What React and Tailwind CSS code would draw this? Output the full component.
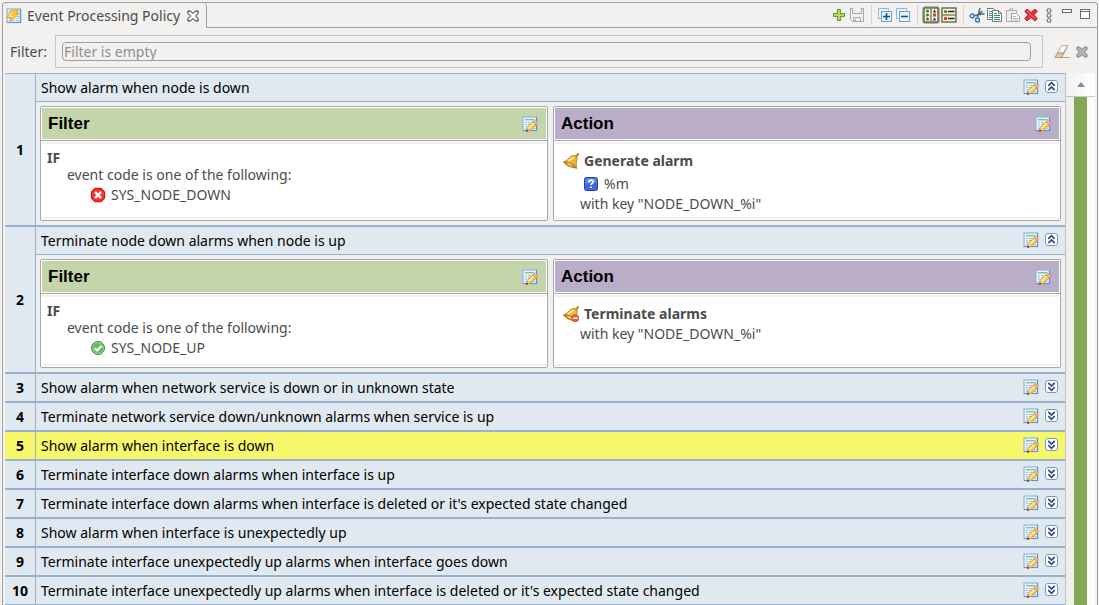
import React, { useState } from "react";

const rules = [
  {
    title: "Show alarm when node is down",
    open: true,
    filter: { event: "SYS_NODE_DOWN", status: "error" },
    action: { kind: "generate", title: "Generate alarm", message: "%m", key: 'with key "NODE_DOWN_%i"' },
  },
  {
    title: "Terminate node down alarms when node is up",
    open: true,
    filter: { event: "SYS_NODE_UP", status: "ok" },
    action: { kind: "terminate", title: "Terminate alarms", key: 'with key "NODE_DOWN_%i"' },
  },
  { title: "Show alarm when network service is down or in unknown state" },
  { title: "Terminate network service down/unknown alarms when service is up" },
  { title: "Show alarm when interface is down", selected: true },
  { title: "Terminate interface down alarms when interface is up" },
  { title: "Terminate interface down alarms when interface is deleted or it's expected state changed" },
  { title: "Show alarm when interface is unexpectedly up" },
  { title: "Terminate interface unexpectedly up alarms when interface goes down" },
  { title: "Terminate interface unexpectedly up alarms when interface is deleted or it's expected state changed" },
];

function Svg({ children }) {
  return (
    <svg viewBox="0 0 16 16" className="block h-4 w-4 shrink-0" aria-hidden="true">
      {children}
    </svg>
  );
}

function Sheet() {
  return (
    <>
      <rect x="1" y="1" width="13.500" height="13.500" fill="#eaf3fd" stroke="#8fb6ea" strokeWidth="1.200" />
      <path d="M1 14.500h13.500V1" fill="none" stroke="#5c8ed6" strokeWidth="1.200" />
      <path d="M3 3.700h9.500" stroke="#7cc278" strokeWidth="1.300" />
      <path d="M3 6.500h10M3 8.500h10M3 10.500h10M3 12.500h10" stroke="#a3c3ee" />
      <path d="M5.500 6v7M9.500 6v7" stroke="#eaf3fd" />
    </>
  );
}

function EditIcon() {
  return (
    <Svg>
      <Sheet />
      <path d="M4.300 15.500l.8-4L11 5.800l3.200 3-5.900 5.500z" fill="#f8d34e" stroke="#cb8c33" strokeWidth=".9" />
      <path d="M6.300 12.300l5.400-5.200" stroke="#fff2ad" strokeWidth="1.300" />
      <path d="M11 5.800l1.300-1.100q3.100-.1 3.200 2.700l-1.300 1.400z" fill="#f3bd94" stroke="#cf8e5c" strokeWidth=".8" />
      <path d="M5.100 11.500l3.200 2.800-4 1.200z" fill="#eeb987" />
      <path d="M4.200 15.700l.5-2.300 1.900 1.700z" fill="#3a2618" />
    </Svg>
  );
}

function ViewIcon() {
  return (
    <Svg>
      <Sheet />
      <path d="M5.500 2h7L10 5.500h3L4.200 14.200l1.300-4.700H.5z" fill="#f8cb42" stroke="#dba136" strokeWidth=".9" />
      <path d="M6.300 3.500L3 8.500h4" fill="none" stroke="#fdeb9c" />
    </Svg>
  );
}

function ChevronIcon({ open }) {
  return (
    <Svg>
      <rect x="1.500" y="1.500" width="12" height="12" rx="2.500" fill="#fff" stroke="#7698b8" />
      <path
        d={open ? "M4.300 6.800l3.200-3.200 3.200 3.200M4.300 11.200L7.500 8l3.200 3.200" : "M4.300 3.800L7.500 7l3.200-3.200M4.300 8.200l3.200 3.200 3.200-3.200"}
        fill="none"
        stroke="#2f478f"
        strokeWidth="1.700"
      />
    </Svg>
  );
}

function ErrorIcon() {
  return (
    <Svg>
      <path d="M5 1.500h6L14.500 5v6L11 14.500H5L1.500 11V5z" fill="#f63a3a" stroke="#e01212" strokeWidth="1.300" strokeLinejoin="round" />
      <path d="M5 5l6 6M11 5l-6 6" stroke="#fff" strokeWidth="2.400" />
    </Svg>
  );
}

function OkIcon() {
  return (
    <Svg>
      <circle cx="8" cy="8" r="6.500" fill="#62b85e" stroke="#3f8f45" />
      <circle cx="8" cy="8" r="5.300" fill="none" stroke="#a4dba0" strokeWidth=".9" />
      <path d="M4.800 8.200l2.400 2.300 4.200-4.500" fill="none" stroke="#fff" strokeWidth="2" />
    </Svg>
  );
}

function UnknownIcon() {
  return (
    <Svg>
      <rect x="1.500" y="1.500" width="13" height="13" rx="2" fill="#3f68dc" stroke="#2340a8" />
      <path d="M2.500 2.500h11v4q-5 1-11 1z" fill="#6389ea" />
      <path d="M6 6.200q0-2 2-2t2 1.700q0 1-1 1.600-.9.5-.9 1.600M8 10.400v1.700" fill="none" stroke="#fff" strokeWidth="1.700" />
    </Svg>
  );
}

function BellIcon({ terminate }) {
  return (
    <Svg>
      <path d="M13.500 3l1.500-1.900" stroke="#c98a25" strokeWidth="2.200" strokeLinecap="round" />
      <path d="M.7 9Q4.500 7.500 6.600 4.600 8.800 1.600 14 2.900q.3 3.600-.6 6.600-.6 2.800.2 5.700z" fill="#eab63c" stroke="#b97a1c" strokeWidth=".9" />
      <path d="M5 7.900Q8.500 6.500 10.500 4" fill="none" stroke="#fde9a0" strokeWidth="2" />
      <path d="M.7 9q2 4.800 12.900 6.200Q10.500 9.400.7 9z" fill="#cf8f2a" stroke="#a9691a" strokeWidth=".7" />
      <path d="M4.500 10.800q3 .2 4.200 2.200" fill="none" stroke="#f9d877" strokeWidth="1.500" />
      {terminate && (
        <>
          <circle cx="12.300" cy="12.200" r="3.500" fill="#ee6a34" stroke="#cf4414" strokeWidth=".8" />
          <path d="M10.200 12.200h4.200" stroke="#fff" strokeWidth="1.500" />
        </>
      )}
    </Svg>
  );
}

function AddIcon() {
  return (
    <Svg>
      <path d="M6.500 2.500h3v4h4v3h-4v4h-3v-4h-4v-3h4z" fill="#a5cc4b" stroke="#5f9430" />
      <path d="M8 3v10M3 8h10" stroke="#c3df74" />
    </Svg>
  );
}

function SaveIcon() {
  return (
    <Svg>
      <path d="M1.500 1.500h2v5h9v-5h2v13h-11l-2-2z" fill="#f4f3f2" stroke="#a9a7a5" />
      <path d="M4.500 14.500v-4h7v4M6.500 12v2.500M3.500 1v5.500h9V1" fill="none" stroke="#a9a7a5" />
    </Svg>
  );
}

function StackIcon({ plus }) {
  return (
    <Svg>
      <path d="M1.500 11.500v-10h10v2M1.500 11.500h2" fill="#e8f4fa" stroke="#8fb8d4" />
      <rect x="4.500" y="4.500" width="10" height="10" fill="#eaf6fb" stroke="#6fa3c9" />
      <path d={plus ? "M6 9.500h7M9.500 6v7" : "M6 9.500h7"} stroke="#164f86" strokeWidth="1.600" />
    </Svg>
  );
}

function ColumnsIcon() {
  return (
    <Svg>
      <rect x="1" y="1" width="14" height="14" fill="#f5f4e4" stroke="#5d5b38" strokeWidth="1.300" />
      <path d="M8 1v14" stroke="#8d8a5c" strokeWidth="1.600" />
      <g fill="#2f8a31">
        <circle cx="4.500" cy="4" r="1.600" />
        <circle cx="4.500" cy="8" r="1.600" />
        <circle cx="4.500" cy="12" r="1.600" />
      </g>
      <path d="M11.500 2.200l1.700 3.300H9.800zM11.500 10.200l1.700 3.300H9.800z" fill="#2637a5" />
      <rect x="10" y="6.500" width="3" height="3" fill="#e8421f" />
    </Svg>
  );
}

function RowsIcon() {
  return (
    <Svg>
      <rect x="1" y="1" width="14" height="14" fill="#f5f4e4" stroke="#5d5b38" strokeWidth="1.300" />
      <path d="M1 8h14" stroke="#8d8a5c" strokeWidth="1.600" />
      <circle cx="4.500" cy="4.500" r="1.600" fill="#2f8a31" />
      <rect x="3" y="10" width="3" height="3" fill="#e8421f" />
      <path d="M7 4.500h6.500M7 11.500h6.500" stroke="#222" strokeWidth="1.400" />
    </Svg>
  );
}

function CutIcon() {
  return (
    <Svg>
      <path d="M11 1L8.500 10.500M15.500 6.500L5 8.800M13.500 4L7.500 9" stroke="#52657a" strokeWidth="1.500" />
      <circle cx="3.200" cy="8.900" r="1.900" fill="#dcecf8" stroke="#3c78b4" strokeWidth="1.400" />
      <circle cx="8.500" cy="13" r="2" fill="#dcecf8" stroke="#3c78b4" strokeWidth="1.400" />
    </Svg>
  );
}

function CopyIcon() {
  return (
    <Svg>
      <path d="M.5 1.500h6l2 2v9h-8z" fill="#fff" stroke="#7c786b" />
      <path d="M2 4.500h4M2 6.500h3M2 8.500h3M2 10.500h3" stroke="#3d8f93" />
      <path d="M5.500 3.500h6l3 3v8h-9z" fill="#fff" stroke="#7c786b" />
      <path d="M11.500 3.500v3h3" fill="none" stroke="#7c786b" />
      <path d="M7 6.500h3M7 8.500h6M7 10.500h6M7 12.500h6" stroke="#23848a" />
    </Svg>
  );
}

function PasteIcon() {
  return (
    <Svg>
      <path d="M1.500 3.500h10v11h-10z" fill="#ecebea" stroke="#b0aeac" />
      <path d="M4.500 3.500q0-2 2-2t2 2z" fill="#f6f5f4" stroke="#a9a7a5" />
      <path d="M6.500 6.500h5l3 3v5h-8z" fill="#f8f7f6" stroke="#a9a7a5" />
      <path d="M8 9.500h3M8 11.500h5M8 13h5" stroke="#bcbab8" />
    </Svg>
  );
}

function DeleteIcon() {
  return (
    <Svg>
      <path d="M4 2l4 3.500L12 2l2.300 2.300L11 8l3.300 3.700L12 14l-4-3.500L4 14l-2.300-2.300L5 8 1.700 4.300z" fill="#e8323c" stroke="#c11622" strokeWidth=".9" />
      <path d="M4 4l7.500 7.500" stroke="#f5767a" />
    </Svg>
  );
}

function MenuIcon() {
  return (
    <Svg>
      <g fill="#fff" stroke="#6c6a68" strokeWidth="1.100">
        <ellipse cx="8" cy="3.500" rx="2" ry="1.700" />
        <ellipse cx="8" cy="8.500" rx="2" ry="1.700" />
        <ellipse cx="8" cy="13.500" rx="2" ry="1.700" />
      </g>
    </Svg>
  );
}

function MinimizeIcon() {
  return (
    <Svg>
      <rect x="3.500" y="2.500" width="9" height="3" fill="#fff" stroke="#6c6a68" />
    </Svg>
  );
}

function MaximizeIcon() {
  return (
    <Svg>
      <rect x="3.500" y="2.500" width="9" height="9" fill="#fff" stroke="#6c6a68" />
      <path d="M3 4.500h10" stroke="#6c6a68" />
    </Svg>
  );
}

function EraserIcon() {
  return (
    <Svg>
      <path d="M7.500 1.500h6l-4 7.500h-6z" fill="#fbf9f5" stroke="#b5a693" strokeWidth=".9" />
      <path d="M3.500 9h6l-2.300 4.500H.8z" fill="#dcc9b0" stroke="#a08c74" strokeWidth=".9" />
      <path d="M13.500 1.500v2.300L8.200 13.500h-1L9.500 9z" fill="#b9a78f" />
      <path d="M6 13.500h9.500" stroke="#b29b80" />
    </Svg>
  );
}

function CrossIcon({ muted }) {
  return (
    <Svg>
      <path
        d="M3 3h2.500L8 5.500 10.500 3H13v2.500L10.500 8l2.500 2.500V13h-2.500L8 10.500 5.500 13H3v-2.500L5.500 8 3 5.500z"
        fill={muted ? "#b5b4b2" : "#fff"}
        stroke={muted ? "#82817f" : "#1a1a1a"}
      />
    </Svg>
  );
}

function IconButton({ label, children, className = "w-4" }) {
  return (
    <button type="button" aria-label={label} className={`flex shrink-0 items-center justify-center ${className}`}>
      {children}
    </button>
  );
}

const toolbar = [
  ["Add rule", <AddIcon />],
  ["Save", <SaveIcon />],
  null,
  ["Expand all", <StackIcon plus />],
  ["Collapse all", <StackIcon />],
  null,
  ["Horizontal layout", <ColumnsIcon />, true],
  ["Vertical layout", <RowsIcon />],
  null,
  ["Cut", <CutIcon />],
  ["Copy", <CopyIcon />],
  ["Paste", <PasteIcon />],
  ["Delete", <DeleteIcon />],
  ["View menu", <MenuIcon />],
  ["Minimize", <MinimizeIcon />],
  ["Maximize", <MaximizeIcon />],
];

function Toolbar() {
  return (
    <div role="toolbar" className="ml-auto flex items-center pr-[3px]">
      {toolbar.map((item, i) =>
        item ? (
          <IconButton
            key={item[0]}
            label={item[0]}
            className={item[2] ? "h-[18px] w-[18px] rounded-[4px] bg-[#b3b1ae]" : "h-[18px] w-[18px]"}
          >
            {item[1]}
          </IconButton>
        ) : (
          <span key={i} className="flex w-[10px] justify-center">
            <span className="h-5 w-px bg-[#d8d6d3]" />
          </span>
        )
      )}
    </div>
  );
}

function Card({ title, headClass, children }) {
  return (
    <section className="flex min-w-0 flex-1 flex-col rounded-[2px] border border-[#a9a8b0] bg-white">
      <header className="border-b border-[#a9a8b0] p-px">
        <div className={`flex h-[31px] items-center justify-between pr-2 pl-[6px] ${headClass}`}>
          <h3 className="font-['Liberation_Sans',sans-serif] text-[17px] leading-[25px] font-bold text-black">{title}</h3>
          <IconButton label={`Edit ${title.toLowerCase()}`}>
            <EditIcon />
          </IconButton>
        </div>
      </header>
      <div className="flex-1 p-px">
        <div className="h-full border-y-2 border-[#f0f0f0] py-[5px]">{children}</div>
      </div>
    </section>
  );
}

function Details({ filter, action }) {
  return (
    <div className="flex gap-[5px] border-t border-[#98b1cf] bg-[#f0f0f0] p-1 text-[#4c4c4c]">
      <Card title="Filter" headClass="bg-[#c5d5aa]">
        <p className="h-[17px] pl-[5px] leading-[17px] font-bold">IF</p>
        <p className="h-[17px] pl-[25px] leading-[17px]">event code is one of the following:</p>
        <p className="flex h-[23px] items-center gap-[5px] pl-12">
          {filter.status === "error" ? <ErrorIcon /> : <OkIcon />}
          {filter.event}
        </p>
      </Card>
      <Card title="Action" headClass="bg-[#b9adc8]">
        <p className="flex h-[23px] items-center gap-[5px] pl-2 font-bold">
          <BellIcon terminate={action.kind === "terminate"} />
          {action.title}
        </p>
        {action.message && (
          <p className="flex h-[23px] items-center gap-[5px] pl-7">
            <UnknownIcon />
            {action.message}
          </p>
        )}
        <p className="h-[17px] pl-[25px] leading-[17px]">{action.key}</p>
      </Card>
    </div>
  );
}

function Rule({ rule, number }) {
  const [open, setOpen] = useState(!!rule.open);
  return (
    <li className={`flex border-b-2 border-[#98b1cf] ${rule.selected ? "bg-[#f6f86a]" : "bg-[#e1e9f0]"}`}>
      <div className="flex w-[31px] shrink-0 items-center justify-center border-r border-[#98b1cf] font-bold text-black">
        {number}
      </div>
      <div className="min-w-0 flex-1">
        <div className="flex h-[27px] items-center gap-1 px-[5px] text-black">
          <h2 className="flex-1 truncate">{rule.title}</h2>
          <div className="flex gap-[5px] pb-px">
            <IconButton label="Edit rule">
              <EditIcon />
            </IconButton>
            <button type="button" aria-label={open ? "Collapse" : "Expand"} aria-expanded={open} onClick={() => setOpen(!open)}>
              <ChevronIcon open={open} />
            </button>
          </div>
        </div>
        {open && rule.filter && <Details filter={rule.filter} action={rule.action} />}
      </div>
    </li>
  );
}

export default function App() {
  return (
    <div className="flex h-screen flex-col overflow-hidden bg-[#f2f1f0] pt-[2px] pr-px pl-[2px] font-['Noto_Sans',sans-serif] text-[14px] leading-5 text-[#4c4c4c]">
      <main className="flex min-h-0 flex-1 flex-col rounded-t-[4px] border-x border-t border-[#a3a19f]">
        <div className="flex h-[25px] shrink-0">
          <div role="tablist" className="flex">
            <button
              type="button"
              role="tab"
              aria-selected="true"
              className="flex items-center gap-[5px] rounded-tr-[4px] border-r border-[#a3a19f] pr-[5px] pl-[3px]"
            >
              <ViewIcon />
              Event Processing Policy
              <CrossIcon />
            </button>
          </div>
          <div className="flex flex-1 border-b border-[#a3a19f]">
            <Toolbar />
          </div>
        </div>

        <div className="flex shrink-0 items-center pt-[7px] pr-[7px] pb-[5px] pl-[7px]">
          <label htmlFor="rule-filter" className="w-[45px] shrink-0">
            Filter:
          </label>
          <div className="flex flex-1 border border-[#c9c7c4] py-[6px] pr-[11px] pl-[6px]">
            <input
              id="rule-filter"
              type="text"
              placeholder="Filter is empty"
              className="h-[19px] w-full rounded-[4px] border border-[#a09e9b] bg-[#f2f1f0] px-px leading-4 outline-none placeholder:text-[#8f8e8c]"
            />
          </div>
          <div className="flex gap-1 pl-[11px]">
            <IconButton label="Clear filter">
              <EraserIcon />
            </IconButton>
            <IconButton label="Close filter">
              <CrossIcon muted />
            </IconButton>
          </div>
        </div>

        <div className="flex min-h-0 flex-1 px-[2px]">
          <ol className="min-w-0 flex-1 overflow-hidden border-t border-[#98b1cf]">
            {rules.map((rule, i) => (
              <Rule key={rule.title} rule={rule} number={i + 1} />
            ))}
          </ol>
          <div className="flex w-[30px] shrink-0 flex-col border-l border-[#c4c2c0]">
            <button
              type="button"
              aria-label="Scroll up"
              className="flex h-6 shrink-0 items-center justify-center border-b border-[#c9c7c5] bg-linear-to-r from-[#f3f2f1] to-white"
            >
              <svg viewBox="0 0 8 5" className="h-[5px] w-2" aria-hidden="true">
                <path d="M4 0l4 5H0z" fill="#8b8987" />
              </svg>
            </button>
            <div className="flex flex-1 bg-linear-to-r from-[#efedec] to-white pl-2">
              <div className="w-[13px] bg-[#87a556]" />
            </div>
          </div>
        </div>
      </main>
    </div>
  );
}
